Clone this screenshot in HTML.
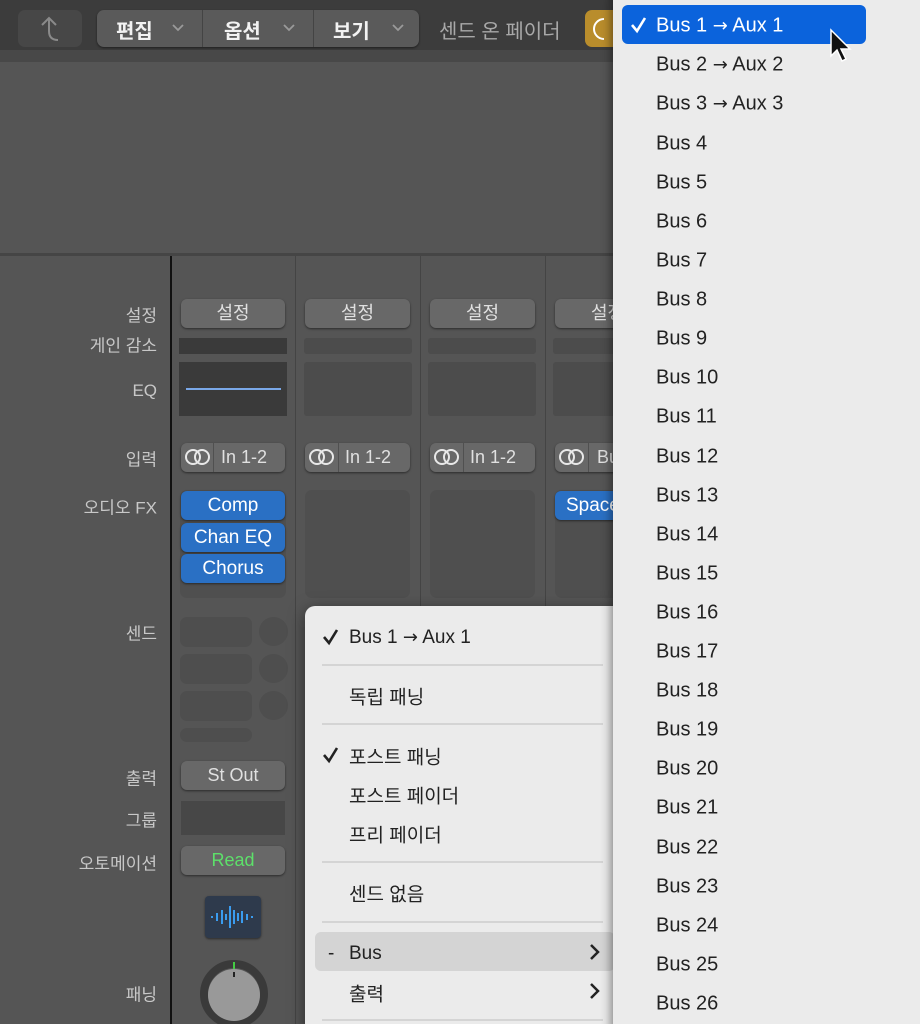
<!DOCTYPE html>
<html style="width:920px;height:1024px;overflow:hidden"><head><meta charset="utf-8"><style>
*{margin:0;padding:0;box-sizing:border-box}
body{width:920px;height:1024px;overflow:hidden;background:#555;font-family:"Liberation Sans","Noto Sans CJK KR",sans-serif;position:relative}
.a{position:absolute}
.ar{font-family:"DejaVu Sans",sans-serif;font-size:18px}
.lbl{position:absolute;right:763px;color:#c8c8c8;font-size:17px;white-space:nowrap;transform:translateY(-50%)}
.btn{position:absolute;height:29px;border-radius:6px;background:#686868;box-shadow:0 1px 2px rgba(0,0,0,.5);color:#e0e0e0;font-size:18px;text-align:center;line-height:29px}
.dk{position:absolute;background:#4c4c4c;border-radius:3px}
.fx{position:absolute;height:29px;border-radius:6px;background:#2a70c4;color:#fff;font-size:19px;text-align:center;line-height:29px;box-shadow:0 1px 2px rgba(0,0,0,.5)}
.mi{position:absolute;left:656px;font-size:20px;color:#222;transform:translateY(-42%);white-space:nowrap}
.si{position:absolute;left:349px;font-size:19px;color:#222;transform:translateY(-42%);white-space:nowrap}
.sep{position:absolute;left:322px;width:281px;height:2px;background:#d4d4d4}
.chk{position:absolute}
</style></head><body>
<!-- toolbar -->
<div class="a" style="left:0;top:0;width:920px;height:62px;background:#3c3c3c"></div>
<div class="a" style="left:0;top:50px;width:920px;height:12px;background:#484848"></div>
<div class="a" style="left:18px;top:10px;width:64px;height:37px;border-radius:7px;background:#474747"></div>
<svg class="a" style="left:36px;top:14px" width="28" height="30" viewBox="0 0 28 30"><path d="M6 11 L13 4 L20 11 M13 4 V17 Q13 26 22 26" stroke="#8a8a8a" stroke-width="2" fill="none"/></svg>
<div class="a" style="left:97px;top:10px;width:322px;height:37px;border-radius:7px;background:#5a5a5a;box-shadow:0 1px 2px rgba(0,0,0,.5)"></div>
<div class="a" style="left:202px;top:10px;width:1px;height:37px;background:#444"></div>
<div class="a" style="left:313px;top:10px;width:1px;height:37px;background:#444"></div>
<div class="a" style="left:116px;top:15px;color:#f2f2f2;font-size:20px;font-weight:bold">편집</div>
<div class="a" style="left:224px;top:15px;color:#f2f2f2;font-size:20px;font-weight:bold">옵션</div>
<div class="a" style="left:333px;top:15px;color:#f2f2f2;font-size:20px;font-weight:bold">보기</div>
<svg class="a" style="left:0;top:0" width="420" height="60"><g stroke="#9a9a9a" stroke-width="1.8" fill="none"><path d="M173 25l5 5 5-5"/><path d="M284 25l5 5 5-5"/><path d="M393 25l5 5 5-5"/></g></svg>
<div class="a" style="left:439px;top:15px;color:#a8a8a8;font-size:20px">센드 온 페이더</div>
<div class="a" style="left:585px;top:10px;width:40px;height:37px;border-radius:7px;background:#b98d2c"></div>
<svg class="a" style="left:592px;top:16px" width="20" height="26"><path d="M12 3 A10 10 0 0 0 12 23" stroke="#fff" stroke-width="2" fill="none"/></svg>
<!-- upper area -->
<div class="a" style="left:0;top:253px;width:920px;height:3px;background:#454545"></div>
<div class="a" style="left:170px;top:256px;width:2px;height:768px;background:#111"></div>
<div class="a" style="left:295px;top:256px;width:1px;height:768px;background:#444"></div>
<div class="a" style="left:420px;top:256px;width:1px;height:768px;background:#444"></div>
<div class="a" style="left:545px;top:256px;width:1px;height:768px;background:#444"></div>
<div class="a" style="left:670px;top:256px;width:1px;height:768px;background:#444"></div>
<div class="a" style="left:795px;top:256px;width:1px;height:768px;background:#444"></div>
<!-- labels -->
<div class="lbl" style="top:314px">설정</div>
<div class="lbl" style="top:344px">게인 감소</div>
<div class="lbl" style="top:391px">EQ</div>
<div class="lbl" style="top:458px">입력</div>
<div class="lbl" style="top:506px">오디오 FX</div>
<div class="lbl" style="top:632px">센드</div>
<div class="lbl" style="top:777px">출력</div>
<div class="lbl" style="top:819px">그룹</div>
<div class="lbl" style="top:862px">오토메이션</div>
<div class="lbl" style="top:993px">패닝</div>
<!-- strip 1 -->
<div class="btn" style="left:181px;top:299px;width:104px">설정</div>
<div class="a" style="left:179px;top:338px;width:108px;height:16px;background:#3a3a3a"></div>
<div class="a" style="left:179px;top:362px;width:108px;height:54px;background:#3a3a3a"></div>
<div class="a" style="left:186px;top:388px;width:95px;height:2px;background:#7aa8e8"></div>
<div class="btn" style="left:181px;top:443px;width:104px;text-align:left;padding-left:40px">In 1-2</div>
<div class="a" style="left:213px;top:443px;width:1px;height:29px;background:#505050"></div>
<div class="a" style="left:180px;top:490px;width:106px;height:108px;border-radius:7px;background:#4f4f4f"></div>
<div class="fx" style="left:181px;top:491px;width:104px">Comp</div>
<div class="fx" style="left:181px;top:523px;width:104px">Chan EQ</div>
<div class="fx" style="left:181px;top:554px;width:104px">Chorus</div>
<div class="a" style="left:180px;top:617px;width:72px;height:30px;border-radius:7px;background:#4e4e4e"></div>
<div class="a" style="left:180px;top:654px;width:72px;height:30px;border-radius:7px;background:#4e4e4e"></div>
<div class="a" style="left:180px;top:691px;width:72px;height:30px;border-radius:7px;background:#4e4e4e"></div>
<div class="a" style="left:180px;top:728px;width:72px;height:14px;border-radius:7px;background:#4e4e4e"></div>
<div class="a" style="left:259px;top:617px;width:29px;height:29px;border-radius:50%;background:#4e4e4e"></div>
<div class="a" style="left:259px;top:654px;width:29px;height:29px;border-radius:50%;background:#4e4e4e"></div>
<div class="a" style="left:259px;top:691px;width:29px;height:29px;border-radius:50%;background:#4e4e4e"></div>
<div class="btn" style="left:181px;top:761px;width:104px">St Out</div>
<div class="a" style="left:181px;top:801px;width:104px;height:34px;background:#474747"></div>
<div class="btn" style="left:181px;top:846px;width:104px;color:#5de06a">Read</div>
<div class="a" style="left:205px;top:896px;width:56px;height:42px;border-radius:4px;background:#2e3a4c;box-shadow:0 1px 2px rgba(0,0,0,.5)"></div>
<svg class="a" style="left:205px;top:896px" width="56" height="42"><g stroke="#3a9cf0" stroke-width="2"><path d="M7 20v2M12 17v8M17 14v14M21 18v6M25 10v22M29 14v14M33 17v8M37 15v12M42 18v6M47 20v2"/></g></svg>
<svg class="a" style="left:196px;top:956px" width="76" height="68"><circle cx="38" cy="38" r="30" fill="none" stroke="#3a3a3a" stroke-width="8"/><circle cx="38" cy="39" r="26" fill="#999"/><path d="M38 6v7" stroke="#4c4" stroke-width="2"/><path d="M38 16v5" stroke="#222" stroke-width="2"/></svg>
<!-- strips 2,3 -->
<div class="btn" style="left:305px;top:299px;width:105px">설정</div>
<div class="dk" style="left:304px;top:338px;width:108px;height:16px"></div>
<div class="dk" style="left:304px;top:362px;width:108px;height:54px"></div>
<div class="btn" style="left:305px;top:443px;width:105px;text-align:left;padding-left:40px">In 1-2</div>
<div class="a" style="left:338px;top:443px;width:1px;height:29px;background:#505050"></div>
<div class="a" style="left:305px;top:490px;width:105px;height:108px;border-radius:7px;background:#4f4f4f"></div>
<div class="btn" style="left:430px;top:299px;width:105px">설정</div>
<div class="dk" style="left:428px;top:338px;width:108px;height:16px"></div>
<div class="dk" style="left:428px;top:362px;width:108px;height:54px"></div>
<div class="btn" style="left:430px;top:443px;width:105px;text-align:left;padding-left:40px">In 1-2</div>
<div class="a" style="left:463px;top:443px;width:1px;height:29px;background:#505050"></div>
<div class="a" style="left:430px;top:490px;width:105px;height:108px;border-radius:7px;background:#4f4f4f"></div>
<!-- strip 4 -->
<div class="btn" style="left:555px;top:299px;width:105px">설정</div>
<div class="dk" style="left:553px;top:338px;width:108px;height:16px"></div>
<div class="dk" style="left:553px;top:362px;width:108px;height:54px"></div>
<div class="btn" style="left:555px;top:443px;width:105px;text-align:left;padding-left:42px">Bus</div>
<div class="a" style="left:588px;top:443px;width:1px;height:29px;background:#505050"></div>
<div class="a" style="left:555px;top:490px;width:105px;height:108px;border-radius:7px;background:#4f4f4f"></div>
<div class="fx" style="left:555px;top:491px;width:105px;text-align:left;padding-left:11px">Space D</div>
<svg class="a" style="left:0;top:0" width="600" height="480"><g fill="none" stroke="#e8e8e8" stroke-width="2"><circle cx="193" cy="457" r="7"/><circle cx="202" cy="457" r="7"/><circle cx="317" cy="457" r="7"/><circle cx="326" cy="457" r="7"/><circle cx="442" cy="457" r="7"/><circle cx="451" cy="457" r="7"/><circle cx="567" cy="457" r="7"/><circle cx="576" cy="457" r="7"/></g></svg>
<!-- strip 5 right -->
<div class="btn" style="left:805px;top:299px;width:103px"></div>
<div class="dk" style="left:803px;top:338px;width:108px;height:16px"></div>
<div class="dk" style="left:803px;top:362px;width:108px;height:54px"></div>
<div class="btn" style="left:805px;top:443px;width:103px;text-align:right;padding-right:14px">Bus 3</div>
<div class="a" style="left:805px;top:490px;width:103px;height:108px;border-radius:7px;background:#4f4f4f"></div>
<div class="fx" style="left:805px;top:491px;width:103px;text-align:right;padding-right:22px">St Out</div>
<div class="btn" style="left:805px;top:761px;width:103px;text-align:right;padding-right:20px">St Out</div>
<div class="a" style="left:805px;top:801px;width:103px;height:34px;background:#474747"></div>
<div class="btn" style="left:805px;top:846px;width:103px;text-align:right;padding-right:28px;color:#ccc">Read</div>
<!-- submenu -->
<div class="a" style="left:305px;top:606px;width:330px;height:430px;border-radius:10px;background:#ebebeb;box-shadow:0 4px 16px rgba(0,0,0,.5)"></div>
<svg class="chk" style="left:321px;top:627px" width="20" height="20"><path d="M3 10 L8 16 L16 3" stroke="#222" stroke-width="2.6" fill="none"/></svg>
<div class="si" style="top:636px">Bus 1 <span class="ar">→</span> Aux 1</div>
<div class="sep" style="top:664px"></div>
<div class="si" style="top:694px">독립 패닝</div>
<div class="sep" style="top:723px"></div>
<svg class="chk" style="left:321px;top:745px" width="20" height="20"><path d="M3 10 L8 16 L16 3" stroke="#222" stroke-width="2.6" fill="none"/></svg>
<div class="si" style="top:754px">포스트 패닝</div>
<div class="si" style="top:793px">포스트 페이더</div>
<div class="si" style="top:832px">프리 페이더</div>
<div class="sep" style="top:861px"></div>
<div class="si" style="top:891px">센드 없음</div>
<div class="sep" style="top:921px"></div>
<div class="a" style="left:315px;top:932px;width:300px;height:39px;border-radius:6px;background:#d4d4d4"></div>
<div class="si" style="left:328px;top:952px">-</div>
<div class="si" style="top:952px">Bus</div>
<div class="si" style="top:991px">출력</div>
<svg class="a" style="left:585px;top:938px" width="20" height="70"><g fill="none" stroke="#222" stroke-width="2.5"><path d="M6 7l7 7-7 7"/><path d="M6 46l7 7-7 7"/></g></svg>
<div class="sep" style="top:1019px"></div>
<!-- main menu -->
<div class="a" style="left:613px;top:-10px;width:320px;height:1050px;border-radius:10px;background:#ebebeb;box-shadow:-2px 0 10px rgba(0,0,0,.45)"></div>
<div class="a" style="left:622px;top:5px;width:244px;height:39px;border-radius:6px;background:#0b63dc"></div>
<svg class="chk" style="left:629px;top:15px" width="20" height="20"><path d="M3 10 L8 16 L16 3" stroke="#fff" stroke-width="2.6" fill="none"/></svg>
<div class="mi" style="top:24px;color:#fff">Bus 1 <span class="ar">→</span> Aux 1</div>
<div class="mi" style="top:63px">Bus 2 <span class="ar">→</span> Aux 2</div>
<div class="mi" style="top:102px">Bus 3 <span class="ar">→</span> Aux 3</div>
<div class="mi" style="top:142px">Bus 4</div>
<div class="mi" style="top:181px">Bus 5</div>
<div class="mi" style="top:220px">Bus 6</div>
<div class="mi" style="top:259px">Bus 7</div>
<div class="mi" style="top:298px">Bus 8</div>
<div class="mi" style="top:337px">Bus 9</div>
<div class="mi" style="top:376px">Bus 10</div>
<div class="mi" style="top:415px">Bus 11</div>
<div class="mi" style="top:455px">Bus 12</div>
<div class="mi" style="top:494px">Bus 13</div>
<div class="mi" style="top:533px">Bus 14</div>
<div class="mi" style="top:572px">Bus 15</div>
<div class="mi" style="top:611px">Bus 16</div>
<div class="mi" style="top:650px">Bus 17</div>
<div class="mi" style="top:689px">Bus 18</div>
<div class="mi" style="top:728px">Bus 19</div>
<div class="mi" style="top:767px">Bus 20</div>
<div class="mi" style="top:806px">Bus 21</div>
<div class="mi" style="top:846px">Bus 22</div>
<div class="mi" style="top:885px">Bus 23</div>
<div class="mi" style="top:924px">Bus 24</div>
<div class="mi" style="top:963px">Bus 25</div>
<div class="mi" style="top:1002px">Bus 26</div>
<!-- cursor -->
<svg class="a" style="left:828px;top:28px" width="26" height="38"><path d="M3 2 L3 28 L9 22 L14 33 L18 31 L13 21 L22 21 Z" fill="#111" stroke="#fff" stroke-width="1.5"/></svg>
</body></html>
